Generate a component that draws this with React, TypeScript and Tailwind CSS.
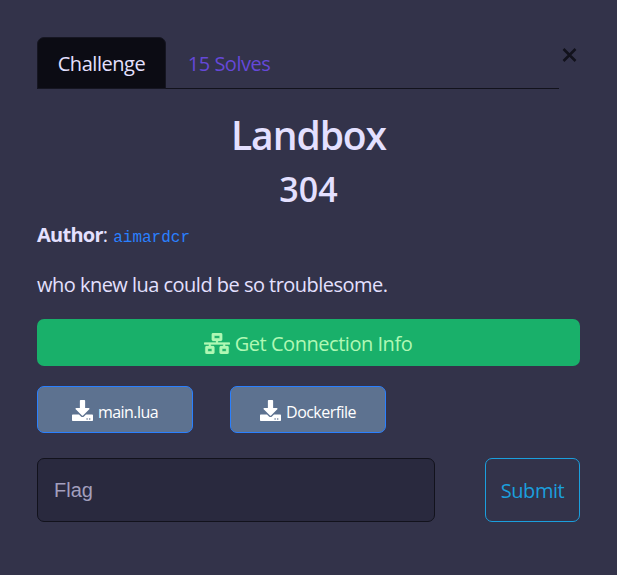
import { useState } from 'react';
import { FaDownload, FaNetworkWired } from 'react-icons/fa';

const files = ['main.lua', 'Dockerfile'];

export default function App() {
    const [tab, setTab] = useState('challenge');
    const [flag, setFlag] = useState('');

    return (
        <div className="h-screen w-full overflow-hidden bg-[#33334a] px-[37px] pt-[37px] font-['Open_Sans','Noto_Sans',sans-serif] text-[20px] text-[#e4e0ff]">
            {/* Tabs */}
            <div className="flex justify-between">
                <div className="flex h-[52px] w-[522px] border-b border-[#12121c]">
                    <button
                        onClick={() => setTab('challenge')}
                        className="h-[52px] w-[129px] rounded-t-[7px] border border-[#161622] bg-[#0c0c14] pt-[2px] tracking-[-0.45px]"
                    >
                        Challenge
                    </button>
                    <button
                        onClick={() => setTab('solves')}
                        className="h-[52px] w-[126px] pt-[2px] tracking-[-0.5px] text-[#6548d8]"
                    >
                        15 Solves
                    </button>
                </div>
                <button aria-label="Close" className="mr-[3px] mt-[11px] h-[14px] w-[15px] text-[#12121c]">
                    <svg viewBox="0 0 15 14" className="h-[14px] w-[15px]" stroke="currentColor" strokeWidth="2.5">
                        <path d="M1.5 1l12 12M13.5 1l-12 12" />
                    </svg>
                </button>
            </div>

            {tab && (
                <div>
                    <h2 className="mt-5 text-center text-[39px] font-semibold leading-[52px] tracking-[-1.05px]">Landbox</h2>
                    <h3 className="mt-1 text-center text-[34px] font-semibold leading-[48px]">304</h3>

                    {/* Description */}
                    <p className="mt-[7px] h-[30px] whitespace-nowrap leading-[30px]">
                        <strong className="tracking-[-0.75px]">Author</strong>:{' '}
                        <code className="font-['Liberation_Mono',monospace] text-[16px] text-[#2a80ff]">aimardcr</code>
                    </p>
                    <p className="mt-5 h-[30px] whitespace-nowrap leading-[30px] tracking-[-0.52px]">
                        who knew lua could be so troublesome.
                    </p>

                    <button className="mt-[19px] flex h-[47px] w-full items-center justify-center gap-[5px] rounded-[7px] bg-[#19b06a] pr-px text-[#b0f8b4]">
                        <FaNetworkWired className="mt-px h-[21px] w-[26px] stroke-current stroke-[8px]" />
                        <span className="mt-[2px] whitespace-nowrap tracking-[-0.47px]">Get Connection Info</span>
                    </button>

                    <div className="mt-5 flex gap-[37px]">
                        {files.map((name) => (
                            <a
                                key={name}
                                href="#"
                                className="flex h-[47px] w-[156px] items-center justify-center gap-[5px] rounded-[7px] border border-[#2a80ff] bg-[#5d7290] text-[16px] text-white"
                            >
                                <FaDownload className="mt-[2px] h-[21px] w-[21px]" />
                                <span className="mt-1 tracking-[-0.55px]">{name}</span>
                            </a>
                        ))}
                    </div>
                </div>
            )}

            {/* Flag submission */}
            <div className="mt-[25px] flex h-16 justify-between">
                <input
                    value={flag}
                    onChange={(e) => setFlag(e.target.value)}
                    placeholder="Flag"
                    className="w-[398px] rounded-[7px] border border-[#12121c] bg-[#29293e] px-4 font-['Liberation_Sans',sans-serif] text-[20px] outline-none placeholder:text-[#a29fbd]"
                />
                <button className="w-[95px] rounded-[7px] border border-[#1b9fdd] pt-[2px] tracking-[-0.45px] text-[#1b9fdd]">
                    Submit
                </button>
            </div>
        </div>
    );
}
